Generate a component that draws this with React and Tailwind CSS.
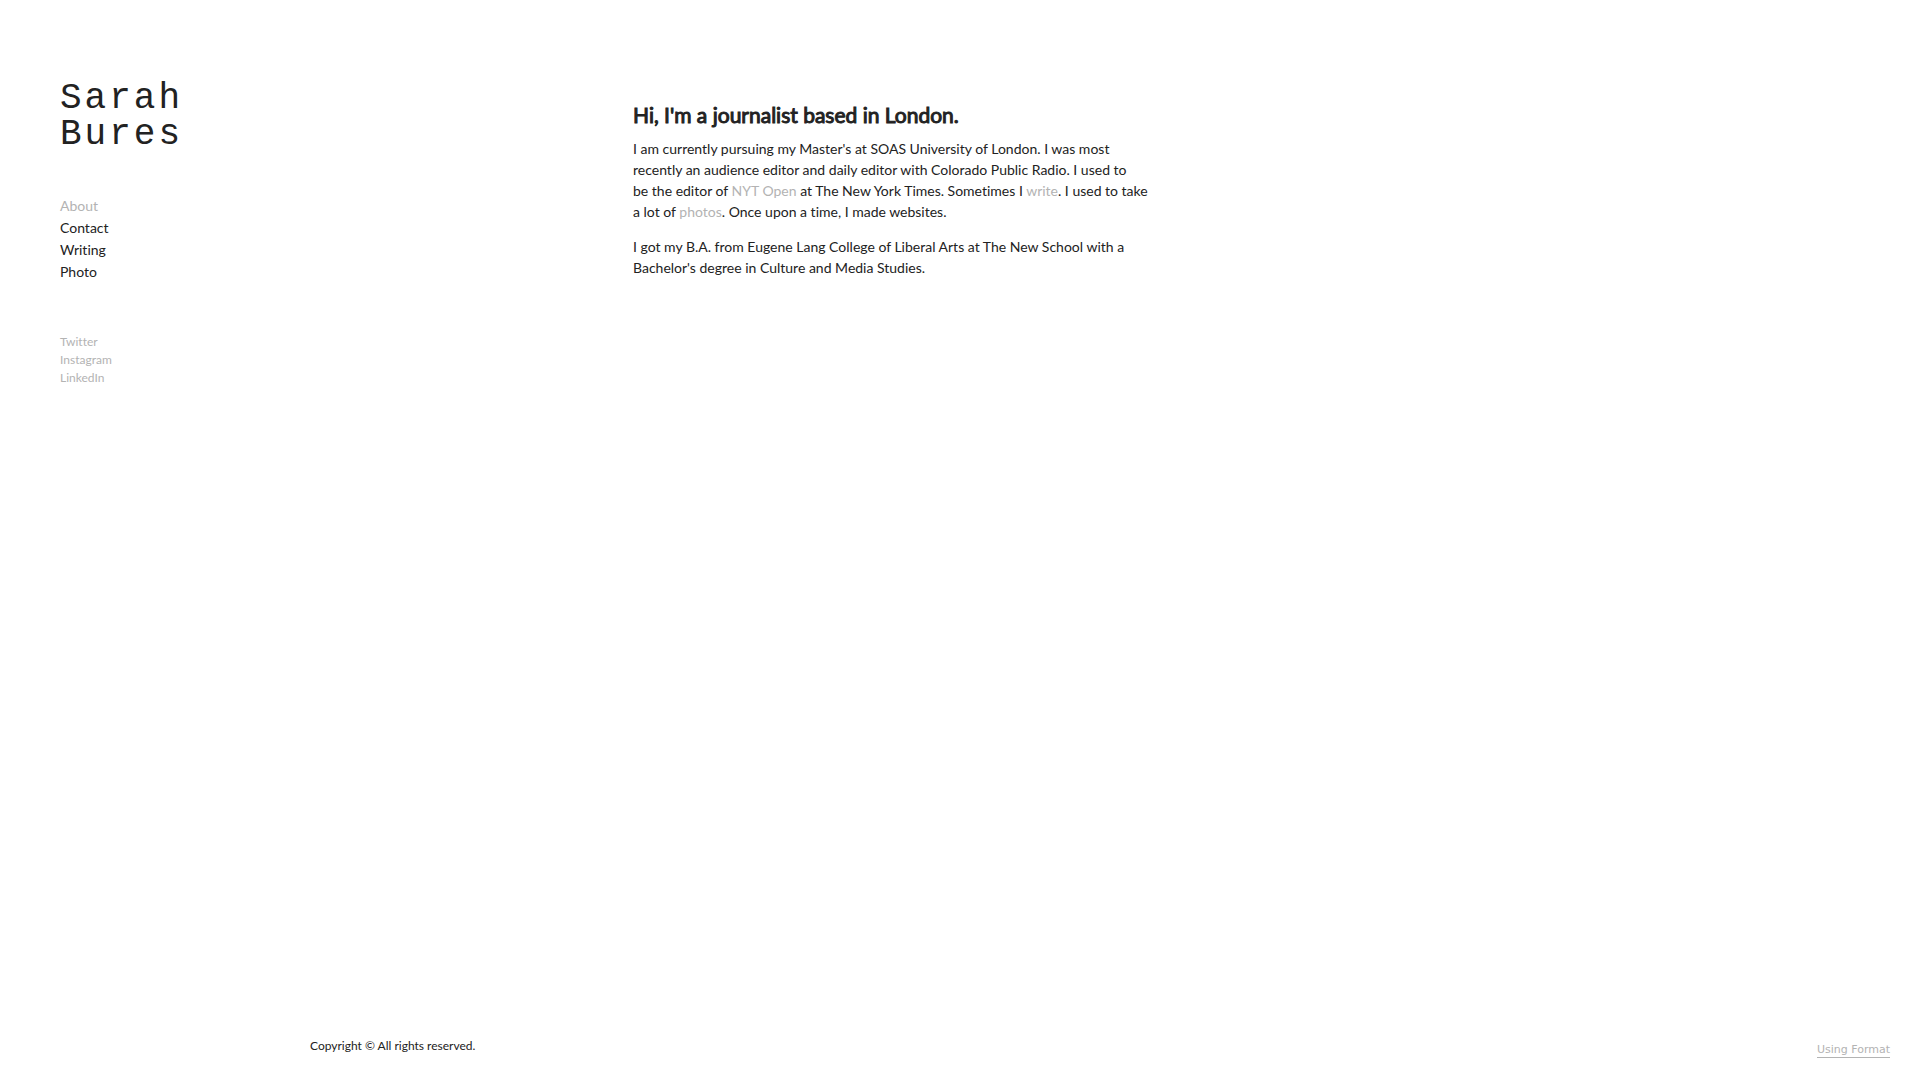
import React from "react";

const navItems = [
  { label: "About", href: "#about", active: true },
  { label: "Contact", href: "#contact" },
  { label: "Writing", href: "#writing" },
  { label: "Photo", href: "#photo" },
];

const socialLinks = [
  { label: "Twitter", href: "#twitter" },
  { label: "Instagram", href: "#instagram" },
  { label: "LinkedIn", href: "#linkedin" },
];

function Sidebar() {
  return (
    <header className="w-[250px] shrink-0">
      <h1 className="w-min font-['Liberation_Mono',monospace] text-[36px] leading-[36px] tracking-[3px]">
        <a href="#home">Sarah Bures</a>
      </h1>
      <nav className="mt-[42px]">
        <ul>
          {navItems.map(({ label, href, active }) => (
            <li key={label} className="text-[14px] leading-[22px]">
              <a href={href} className={active ? "text-[#b3b3b3]" : "hover:text-[#b3b3b3]"}>{label}</a>
            </li>
          ))}
        </ul>
        <ul className="mt-[50px] text-[#b3b3b3]">
          {socialLinks.map(({ label, href }) => (
            <li key={label} className="text-[12px] leading-[18px]">
              <a href={href}>{label}</a>
            </li>
          ))}
        </ul>
      </nav>
    </header>
  );
}

function About() {
  return (
    <main className="flex-1 pt-[19px]">
      <article className="ml-[323px] max-w-[520px] text-[14px] leading-[21px]">
        <h2 className="mb-2 text-[21px] leading-[30px] [-webkit-text-stroke:1px_#222222]">
          Hi, I'm a journalist based in London.
        </h2>
        {/* non-breaking spaces keep the short words with the one after */}
        <p className="mb-[14px]">
          I am currently pursuing my Master's at SOAS University of London. I was most recently an audience editor and
          daily editor with Colorado Public Radio. I used to be{"\u00a0"}the editor of{" "}
          <a href="#open" className="text-[#b3b3b3]">NYT Open</a> at The New York Times. Sometimes I{" "}
          <a href="#write" className="text-[#b3b3b3]">write</a>. I used to take a{"\u00a0"}lot of{" "}
          <a href="#photos" className="text-[#b3b3b3]">photos</a>. Once upon a time, I made websites.
        </p>
        <p>
          I got my B.A. from Eugene Lang College of Liberal Arts at The New School with a Bachelor's degree in Culture
          and Media Studies.
        </p>
      </article>
    </main>
  );
}

export default function App() {
  return (
    <div className="flex min-h-screen flex-col bg-white font-[Lato,sans-serif] text-[#222222] [font-variant-ligatures:none]">
      <div className="flex flex-1 px-[60px] pt-[81px]">
        <Sidebar />
        <About />
      </div>
      <footer className="flex items-end justify-between pr-[30px] pb-[22px] pl-[310px]">
        <p className="text-[12px] leading-[24px]">Copyright © All rights reserved.</p>
        <a href="#format" className="border-b border-[#b3b3b3] font-['DejaVu_Sans',sans-serif] text-[11px] leading-[14px] text-[#b3b3b3]">
          Using Format
        </a>
      </footer>
    </div>
  );
}
